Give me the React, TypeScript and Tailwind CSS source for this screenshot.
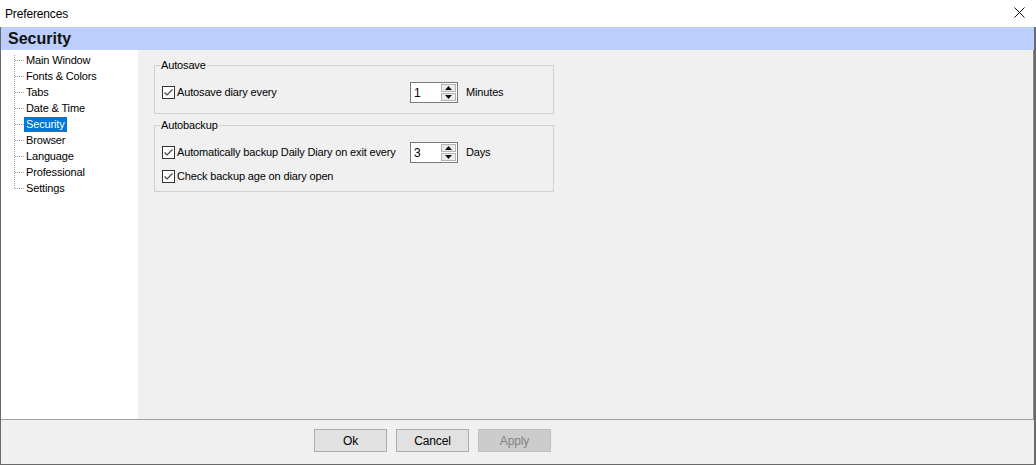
import React from "react";

const treeItems = [
  "Main Window",
  "Fonts & Colors",
  "Tabs",
  "Date & Time",
  "Security",
  "Browser",
  "Language",
  "Professional",
  "Settings",
];

function CheckBox() {
  return (
    <span className="flex h-[13px] w-[13px] shrink-0 items-center justify-center border border-[#333333] bg-white">
      <svg width="11" height="11" viewBox="0 0 11 11">
        <path d="M1.5 5.5 L4 8 L9.5 2.5" fill="none" stroke="#444444" strokeWidth="1.2" />
      </svg>
    </span>
  );
}

function Spinner({ value }: { value: string }) {
  return (
    <div className="flex h-[21px] w-[48px] items-center border border-[#7a7a7a] bg-white pl-[3px] pr-[1px]">
      <span className="flex-1 text-[12px] leading-none">{value}</span>
      <div className="flex flex-col gap-[1px]">
        <span className="flex h-[8px] w-[15px] items-center justify-center border border-[#b4b4b4] bg-[#ececec]">
          <svg width="7" height="4" viewBox="0 0 7 4">
            <path d="M0 4 L3.5 0 L7 4 Z" fill="#111111" />
          </svg>
        </span>
        <span className="flex h-[8px] w-[15px] items-center justify-center border border-[#b4b4b4] bg-[#ececec]">
          <svg width="7" height="4" viewBox="0 0 7 4">
            <path d="M0 0 L3.5 4 L7 0 Z" fill="#111111" />
          </svg>
        </span>
      </div>
    </div>
  );
}

function Group({ title, children }: { title: string; children: React.ReactNode }) {
  return (
    <fieldset className="w-[400px] border border-[#d0d0d0] pl-[7px]">
      <legend className="-ml-[2px] px-[1px] text-[11px] leading-[13px]">{title}</legend>
      {children}
    </fieldset>
  );
}

export default function App() {
  return (
    <div className="flex h-[465px] w-[1036px] flex-col bg-white font-['Liberation_Sans',Arial,sans-serif] text-[11px] tracking-[-0.15px] text-black">
      {/* title bar */}
      <div className="flex h-[27px] shrink-0 items-center justify-between bg-white pl-[5px] pr-[10px]">
        <span className="text-[12px]">Preferences</span>
        <svg width="11" height="11" viewBox="0 0 11 11" className="mr-[1px] mb-[2px]">
          <path d="M0.5 0.5 L10.5 10.5 M10.5 0.5 L0.5 10.5" stroke="#111111" strokeWidth="1" />
        </svg>
      </div>

      <div className="flex flex-1 flex-col border-r-2 border-b border-l border-[#6a6a6a] bg-[#f0f0f0]">
        {/* header */}
        <div className="flex h-[23px] shrink-0 items-center bg-[#bccefb] pl-[7px]">
          <span className="text-[16px] leading-none font-bold tracking-normal text-[#111111]">Security</span>
        </div>

        {/* body */}
        <div className="flex h-[369px] shrink-0">
          <div className="relative w-[137px] shrink-0 bg-white pt-[2px]">
            <svg className="absolute top-0 left-0" width="30" height="200">
              <line x1="13.5" y1="5" x2="13.5" y2="138" stroke="#a0a0a0" strokeDasharray="1 1" />
              {treeItems.map((_, i) => (
                <line
                  key={i}
                  x1="14"
                  y1={10.5 + i * 16}
                  x2="23"
                  y2={10.5 + i * 16}
                  stroke="#a0a0a0"
                  strokeDasharray="1 1"
                />
              ))}
            </svg>
            <ul className="pl-[23px]">
              {treeItems.map((item) => (
                <li key={item} className="flex h-[16px] items-center">
                  <span
                    className={
                      item === "Security"
                        ? "bg-[#0078d7] px-[2px] leading-[15px] text-white"
                        : "px-[2px] leading-[15px]"
                    }
                  >
                    {item}
                  </span>
                </li>
              ))}
            </ul>
          </div>

          <div className="flex flex-1 flex-col gap-[5px] border-r border-[#8c8c8c] pt-[9px] pl-[16px]">
            <Group title="Autosave">
              <div className="mt-[10px] mb-[10px] flex h-[21px] items-center">
                <div className="flex w-[248px] items-center gap-[2px]">
                  <CheckBox />
                  <span>Autosave diary every</span>
                </div>
                <Spinner value="1" />
                <span className="ml-[8px]">Minutes</span>
              </div>
            </Group>

            <Group title="Autobackup">
              <div className="mt-[10px] flex h-[21px] items-center">
                <div className="flex w-[248px] items-center gap-[2px]">
                  <CheckBox />
                  <span>Automatically backup Daily Diary on exit every</span>
                </div>
                <Spinner value="3" />
                <span className="ml-[8px]">Days</span>
              </div>
              <div className="mt-[5px] mb-[7px] flex h-[16px] items-center gap-[2px]">
                <CheckBox />
                <span>Check backup age on diary open</span>
              </div>
            </Group>
          </div>
        </div>

        {/* footer */}
        <div className="flex flex-1 items-start gap-[9px] border-t border-[#a0a0a0] pt-[9px] pl-[313px]">
          <button className="h-[23px] w-[73px] border border-[#adadad] bg-[#e1e1e1] text-[12px]">Ok</button>
          <button className="h-[23px] w-[73px] border border-[#adadad] bg-[#e1e1e1] text-[12px]">Cancel</button>
          <button className="h-[23px] w-[73px] border border-[#bfbfbf] bg-[#cccccc] text-[12px] text-[#838383]">
            Apply
          </button>
        </div>
      </div>
    </div>
  );
}
